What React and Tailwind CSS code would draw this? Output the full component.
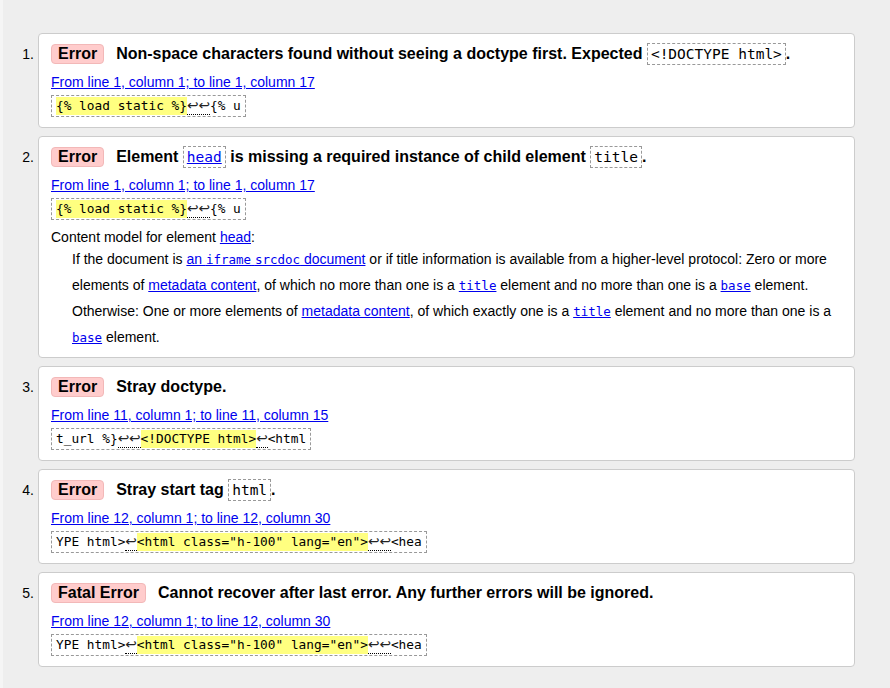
import React from "react";

const mono = "font-['DejaVu_Sans_Mono','Liberation_Mono',monospace]";

function Badge({ children }) {
  return (
    <span className="inline-flex items-center h-[20px] px-[6px] rounded-[4px] bg-[#ffcccc] border border-[#f2b8b8] text-[16px] font-bold leading-none">
      {children}
    </span>
  );
}

function TCode({ children, link }) {
  return (
    <span
      className={`inline-flex items-center h-[22px] px-[3px] border border-dashed border-[#999] ${mono} text-[14.5px] leading-none ${link ? "text-[#0000ee]" : "font-normal"}`}
    >
      {link ? <span className="underline font-normal">{children}</span> : children}
    </span>
  );
}

function Ret({ children }) {
  return (
    <span className="inline-block h-[18px] leading-[17px] border-b border-dotted border-black text-[#222] font-['DejaVu_Sans',sans-serif] text-[13.7px]">
      {children}
    </span>
  );
}

function Hl({ children }) {
  return <span className="inline-block h-[18px] bg-[#ffff80]">{children}</span>;
}

function Extract({ children }) {
  return (
    <div className="flex mt-[4px]">
      <span className={`inline-flex items-start h-[22px] px-[4px] py-[1px] border border-dashed border-[#999] ${mono} text-[12.8px] leading-[18px] whitespace-pre`}>
        {children}
      </span>
    </div>
  );
}

function Loc({ children }) {
  return (
    <div className="mt-[8px] leading-[18px] text-[14px]">
      <a className="text-[#0000ee] underline cursor-pointer">{children}</a>
    </div>
  );
}

function Item({ n, badge, title, children, last }) {
  return (
    <li className={`flex items-start ${last ? "" : "mb-[8px]"}`}>
      <span className="w-[35px] pr-[4px] text-right text-[14px] leading-[22px] mt-[10px]">{n}.</span>
      <div className="flex-1 bg-white border border-[#cccccc] rounded-[4px] pl-[12px] pr-[12px] pt-[9px] pb-[10px]">
        <div className="flex items-center h-[22px]">
          <Badge>{badge}</Badge>
          <span className="ml-[12px] text-[16px] font-bold leading-[22px] flex items-center whitespace-pre">{title}</span>
        </div>
        {children}
      </div>
    </li>
  );
}

function PMono({ children }) {
  return <span className={`${mono} text-[12.5px] leading-none`}>{children}</span>;
}

export default function App() {
  return (
    <div className="min-h-screen flex bg-[#eeeeee] text-black font-['Liberation_Sans',Arial,sans-serif]">
      <div className="w-[3px] bg-[#f5f5f5]" />
      <ol className="flex-1 pt-[33px] pr-[35px] pb-[20px]">
        <Item
          n={1}
          badge="Error"
          title={
            <>
              Non-space characters found without seeing a doctype first. Expected <TCode>&lt;!DOCTYPE html&gt;</TCode>.
            </>
          }
        >
          <Loc>From line 1, column 1; to line 1, column 17</Loc>
          <Extract>
            <Hl>{"{% load static %}"}</Hl>
            <Ret>↩↩</Ret>
            {"{% u"}
          </Extract>
        </Item>

        <Item
          n={2}
          badge="Error"
          title={
            <>
              Element <TCode link>head</TCode> is missing a required instance of child element <TCode>title</TCode>.
            </>
          }
        >
          <Loc>From line 1, column 1; to line 1, column 17</Loc>
          <Extract>
            <Hl>{"{% load static %}"}</Hl>
            <Ret>↩↩</Ret>
            {"{% u"}
          </Extract>
          <div className="mt-[8px] text-[14px] leading-[18px]">
            Content model for element <a className="text-[#0000ee] underline">head</a>:
          </div>
          <div className="pl-[21px] text-[14px] leading-[26px] mb-[-3px]">
            <p>
              If the document is{" "}
              <a className="text-[#0000ee] underline">
                an <PMono>iframe</PMono> <PMono>srcdoc</PMono> document
              </a>{" "}
              or if title information is available from a higher-level protocol: Zero or more elements of{" "}
              <a className="text-[#0000ee] underline">metadata content</a>, of which no more than one is a{" "}
              <a className="text-[#0000ee] underline"><PMono>title</PMono></a> element and no more than one is a{" "}
              <a className="text-[#0000ee] underline"><PMono>base</PMono></a> element.
            </p>
            <p>
              Otherwise: One or more elements of{" "}
              <a className="text-[#0000ee] underline">metadata content</a>, of which exactly one is a{" "}
              <a className="text-[#0000ee] underline"><PMono>title</PMono></a> element and no more than one is a{" "}
              <a className="text-[#0000ee] underline"><PMono>base</PMono></a> element.
            </p>
          </div>
        </Item>

        <Item n={3} badge="Error" title={<>Stray doctype.</>}>
          <Loc>From line 11, column 1; to line 11, column 15</Loc>
          <Extract>
            {"t_url %}"}
            <Ret>↩↩</Ret>
            <Hl>{"<!DOCTYPE html>"}</Hl>
            <Ret>↩</Ret>
            {"<html"}
          </Extract>
        </Item>

        <Item
          n={4}
          badge="Error"
          title={
            <>
              Stray start tag <TCode>html</TCode>.
            </>
          }
        >
          <Loc>From line 12, column 1; to line 12, column 30</Loc>
          <Extract>
            {"YPE html>"}
            <Ret>↩</Ret>
            <Hl>{'<html class="h-100" lang="en">'}</Hl>
            <Ret>↩↩</Ret>
            {"<hea"}
          </Extract>
        </Item>

        <Item n={5} badge="Fatal Error" title={<>Cannot recover after last error. Any further errors will be ignored.</>} last>
          <Loc>From line 12, column 1; to line 12, column 30</Loc>
          <Extract>
            {"YPE html>"}
            <Ret>↩</Ret>
            <Hl>{'<html class="h-100" lang="en">'}</Hl>
            <Ret>↩↩</Ret>
            {"<hea"}
          </Extract>
        </Item>
      </ol>
    </div>
  );
}
